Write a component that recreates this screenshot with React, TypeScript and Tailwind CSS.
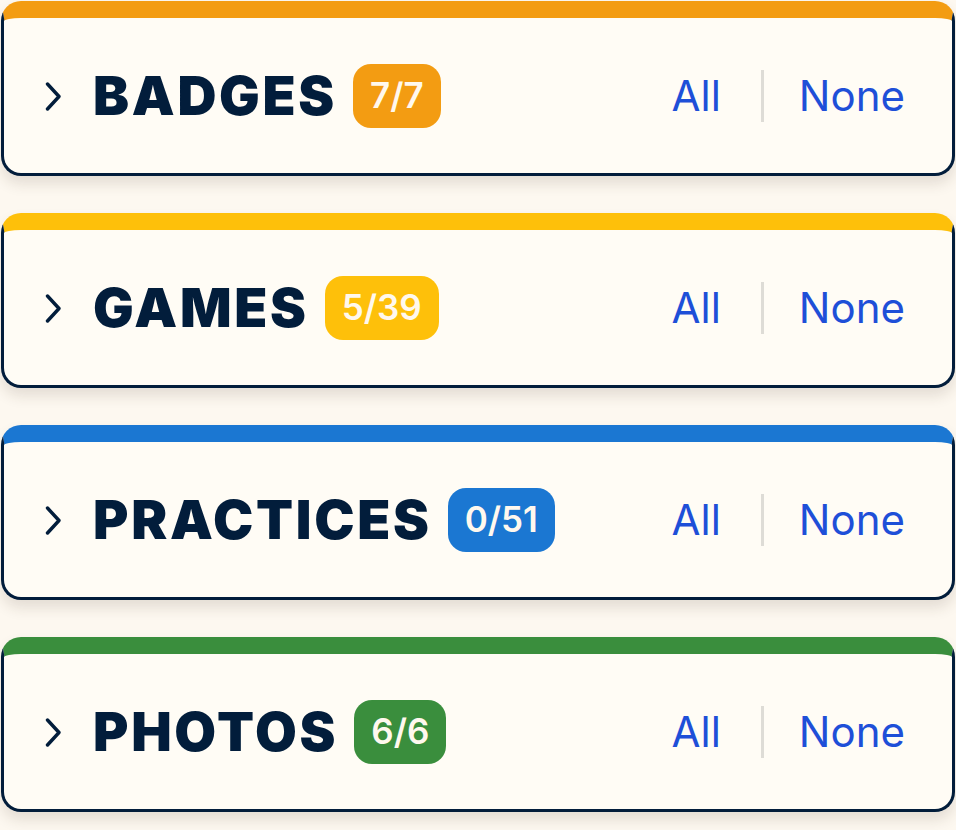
import React from 'react';

interface Section {
  title: string;
  count: string;
  border: string;
  badge: string;
}

const sections: Section[] = [
  { title: 'BADGES', count: '7/7', border: 'border-t-[#f39c12]', badge: 'bg-[#f39c12]' },
  { title: 'GAMES', count: '5/39', border: 'border-t-[#fec00a]', badge: 'bg-[#fec00a]' },
  { title: 'PRACTICES', count: '0/51', border: 'border-t-[#1b77d2]', badge: 'bg-[#1b77d2]' },
  { title: 'PHOTOS', count: '6/6', border: 'border-t-[#3a8e3d]', badge: 'bg-[#3a8e3d]' },
];

function Chevron() {
  return (
    <svg width="16" height="30" viewBox="0 0 16 30" fill="none" className="shrink-0">
      <path d="M2.5 3 L14 15.5 L2.5 28" stroke="#021d3b" strokeWidth="3.4" strokeLinecap="round" strokeLinejoin="round" />
    </svg>
  );
}

function SectionCard({ section }: { section: Section }) {
  return (
    <div
      className={`h-[175px] rounded-[20px] border-x-[3px] border-b-[3px] border-t-[17px] border-[#021d3b] ${section.border} bg-[#fffcf5] shadow-[0_8px_14px_rgba(60,50,30,0.13)] flex items-center pl-[41px] pr-[47px]`}
    >
      {/* Left - chevron, title, count */}
      <Chevron />
      <h2 className="ml-[32px] text-[54px] leading-none font-black tracking-[0.05em] text-[#021d3b]">
        {section.title}
      </h2>
      <span
        className={`ml-[16px] h-[64px] px-[17px] rounded-[18px] flex items-center text-[35px] font-semibold text-[#fff8ee] ${section.badge}`}
      >
        {section.count}
      </span>

      {/* Right - select all / none */}
      <div className="ml-auto flex items-center text-[42px] leading-none text-[#1e4fd8]">
        <button className="cursor-pointer">All</button>
        <div className="ml-[40px] mr-[35px] w-[3px] h-[52px] bg-[#dedcd6]" />
        <button className="cursor-pointer">None</button>
      </div>
    </div>
  );
}

export default function App() {
  return (
    <div className="min-h-[830px] bg-[#fdf8f0] px-[1px] pt-[1px] flex flex-col gap-[37px] font-['Inter',sans-serif]">
      {sections.map((s) => (
        <SectionCard key={s.title} section={s} />
      ))}
    </div>
  );
}
